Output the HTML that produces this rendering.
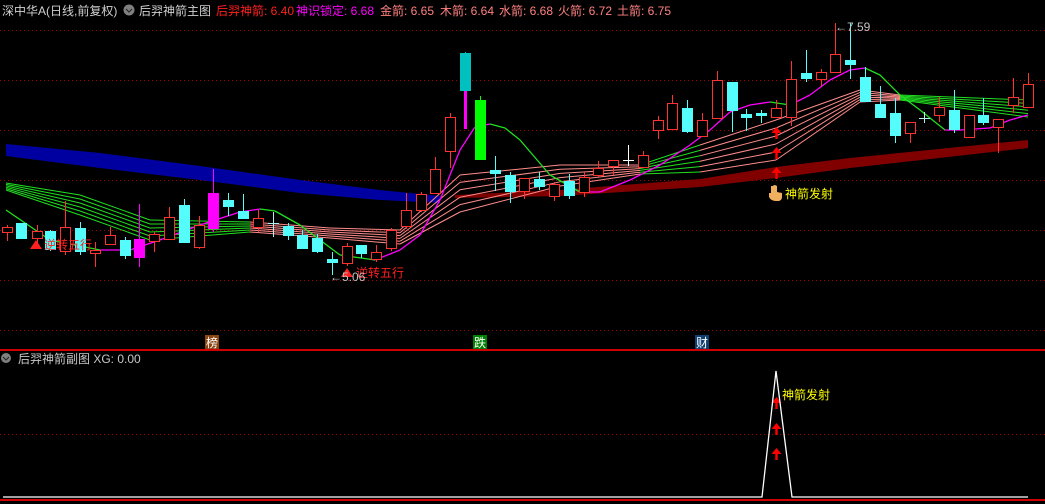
<!DOCTYPE html>
<html><head><meta charset="utf-8">
<style>
html,body{margin:0;padding:0;background:#000;width:1045px;height:504px;overflow:hidden}
svg{display:block}
text{font-family:"Liberation Sans","Noto Sans CJK SC",sans-serif;font-size:12px}
</style></head>
<body>
<svg id="s" width="1045" height="504" viewBox="0 0 1045 504" xmlns="http://www.w3.org/2000/svg">
<g stroke="#a00000" stroke-dasharray="1,3" stroke-width="1">
<line x1="0" y1="30.5" x2="1045" y2="30.5"/><line x1="0" y1="80.5" x2="1045" y2="80.5"/>
<line x1="0" y1="130.5" x2="1045" y2="130.5"/><line x1="0" y1="180.5" x2="1045" y2="180.5"/>
<line x1="0" y1="230.5" x2="1045" y2="230.5"/><line x1="0" y1="280.5" x2="1045" y2="280.5"/>
<line x1="0" y1="330.5" x2="1045" y2="330.5"/><line x1="0" y1="434.5" x2="1045" y2="434.5"/>
</g>
<polygon fill="#0000a0" points="6,144 100,153 200,166 300,180 380,190 440,196 440,203 380,200 300,193 200,180 100,168 6,156"/>
<polygon fill="#800000" points="455,195 560,190 700,179 776,167 850,158 1028,140 1028,148 850,168 776,178 700,187 560,196 455,198"/>
<g id="fan" fill="none" stroke-width="1"></g>
<g id="ma" fill="none" stroke-width="1.3"></g>
<g id="c"></g>
<polygon points="30,249 36,240 42,249" fill="#ff2020"/>
<text x="44" y="249" fill="#ff2020" font-size="13">逆转五行</text>
<polygon points="341,277 347,268 353,277" fill="#ff2020"/>
<text x="356" y="277" fill="#ff2020" font-size="13">逆转五行</text>
<text x="330" y="281" fill="#c0c0c0">←5.06</text>
<text x="835" y="31" fill="#c0c0c0">←7.59</text>
<g fill="#ff0000" id="arr"></g>
<path d="M771,186 l0,7 l-2,0 l0,4 q2,4 7,4 l3,0 q3,-1 3,-4 l0,-4 l-5,-1 l0,-6 q-3,-2 -4,0z" fill="#f0b060"/>
<text x="785" y="198" fill="#ffff00" font-size="13">神箭发射</text>
<rect x="205" y="335" width="14" height="14" fill="#8b4513"/><text x="206" y="347" fill="#fff">榜</text>
<rect x="473" y="335" width="14" height="14" fill="#008000"/><text x="474" y="347" fill="#fff">跌</text>
<rect x="695" y="335" width="14" height="14" fill="#104070"/><text x="696" y="347" fill="#fff">财</text>
<rect x="0" y="349" width="1045" height="2" fill="#d00000"/>
<rect x="0" y="499" width="1045" height="2" fill="#d00000"/>
<circle cx="6" cy="358" r="5" fill="#808080"/><path d="M3,357 l3,3 l3,-3" stroke="#222" fill="none"/>
<text x="18" y="363" fill="#c8c8c8">后羿神箭副图 XG: 0.00</text>
<polyline points="3,497 762,497 776,371 792,497 1028,497" fill="none" stroke="#fff" stroke-width="1.3"/>
<text x="782" y="399" fill="#ffff00" font-size="13">神箭发射</text>
<text x="2" y="15" fill="#d0d0d0">深中华A(日线,前复权)</text>
<circle cx="129" cy="10" r="5.5" fill="#808080"/><path d="M126,9 l3,3 l3,-3" stroke="#222" fill="none"/>
<text x="139" y="15" fill="#d0d0d0">后羿神箭主图</text>
<text x="216" y="15" fill="#ff2020">后羿神箭: 6.40</text>
<text x="296" y="15" fill="#ff00ff">神识锁定: 6.68</text>
<text x="380" y="15" fill="#ff8080">金箭: 6.65</text>
<text x="440" y="15" fill="#ff8080">木箭: 6.64</text>
<text x="499" y="15" fill="#ff8080">水箭: 6.68</text>
<text x="558" y="15" fill="#ff8080">火箭: 6.72</text>
<text x="617" y="15" fill="#ff8080">土箭: 6.75</text>
</svg>
<script>
var NS="http://www.w3.org/2000/svg";
function el(p,t,a){var e=document.createElementNS(NS,t);for(var k in a)e.setAttribute(k,a[k]);p.appendChild(e);return e;}
var env=[[6,183,190,'g'],[80,195,215,'g'],[150,220,240,'g'],[250,222,232,'p'],[330,228,238,'p'],[400,230,244,'p'],[460,175,212,'p'],[560,165,186,'p'],[640,165,174,'g'],[700,145,172,'p'],[776,120,160,'p'],[860,90,102,'p'],[900,95,100,'g'],[1028,100,117,'g']];
var fan=document.getElementById('fan');
for(var i=0;i<6;i++){var f=i/5;
 for(var j=0;j<env.length-1;j++){var a=env[j],b=env[j+1];
  var y1=a[1]+(a[2]-a[1])*f,y2=b[1]+(b[2]-b[1])*f;
  el(fan,'line',{x1:a[0],y1:y1,x2:b[0],y2:y2,stroke:a[3]=='g'?'#20e020':'#ff8c8c'});}}
var ma=[[6,210,'g'],[50,240,'g'],[100,250,'m'],[130,250,'m'],[160,240,'m'],[200,225,'m'],[240,212,'m'],[260,209,'g'],[275,211,'g'],[300,225,'g'],[340,255,'g'],[375,260,'m'],[400,250,'m'],[420,235,'m'],[440,200,'m'],[460,150,'m'],[475,127,'m'],[490,124,'g'],[505,128,'g'],[520,140,'g'],[550,175,'g'],[580,192,'m'],[600,192,'m'],[630,180,'m'],[660,165,'m'],[690,145,'m'],[710,130,'m'],[730,112,'m'],[750,105,'m'],[770,102,'g'],[790,105,'m'],[810,95,'m'],[830,80,'m'],[850,70,'m'],[865,68,'g'],[880,75,'g'],[900,95,'g'],[920,110,'g'],[945,130,'m'],[960,130,'m'],[990,128,'m'],[1010,120,'m'],[1028,115,'m']];
var mg=document.getElementById('ma');
for(var j=0;j<ma.length-1;j++)el(mg,'line',{x1:ma[j][0],y1:ma[j][1],x2:ma[j+1][0],y2:ma[j+1][1],stroke:ma[j][2]=='g'?'#20e020':'#ff00ff'});
var C=[[7,'r',227,232,225,241],[21,'c',223,239,223,239],[37,'r',231,238,225,243],[50,'c',231,250,230,251],[65,'r',227,251,201,255],[80,'c',228,252,222,255],[95,'r',250,253,242,267],[110,'r',235,244,227,244],[125,'c',240,256,237,259],[139,'m',239,258,204,267],[154,'r',234,241,232,252],[169,'r',217,239,207,239],[184,'c',205,243,199,243],[199,'r',225,247,216,249],[213,'m',193,229,169,232],[228,'c',200,207,193,216],[243,'c',211,219,194,219],[258,'r',218,227,210,232],[273,'x',223,223,212,237],[288,'c',226,236,223,240],[302,'c',235,249,230,249],[317,'c',238,252,234,253],[332,'c',259,263,252,275],[347,'r',246,263,243,266],[361,'c',245,254,245,258],[376,'r',252,259,245,262],[391,'r',230,248,228,251],[406,'r',210,226,193,229],[421,'r',194,210,192,212],[435,'r',169,193,157,193],[450,'r',117,151,113,168],[465,'t',53,91,52,91],[480,'g',100,160,96,160],[495,'c',170,174,156,191],[510,'c',175,192,172,203],[524,'r',178,191,178,199],[539,'c',179,187,172,190],[554,'r',184,196,182,201],[569,'c',181,196,174,199],[584,'r',177,192,172,197],[598,'r',168,175,161,177],[613,'r',160,166,160,175],[628,'w',160,160,145,166],[643,'r',155,167,151,167],[658,'r',120,130,116,139],[672,'r',103,129,95,129],[687,'c',108,132,100,133],[702,'r',120,136,113,136],[717,'r',80,118,71,118],[732,'c',82,111,82,132],[746,'c',114,118,109,131],[761,'c',113,116,110,123],[776,'r',108,117,100,117],[791,'r',79,117,61,126],[806,'c',73,79,50,82],[821,'r',72,79,69,86],[835,'r',54,72,23,72],[850,'c',60,65,23,79],[865,'c',77,102,67,102],[880,'c',104,118,86,118],[895,'c',113,136,98,143],[910,'r',122,133,122,143],[924,'x',118,118,112,123],[939,'r',107,115,97,122],[954,'c',110,130,90,133],[969,'r',115,137,115,137],[983,'c',115,123,98,125],[998,'r',119,127,119,153],[1013,'r',97,105,78,113],[1028,'r',84,107,73,107]];
var cg=document.getElementById('c');
var col={r:'#ff3232',c:'#54fcfc',m:'#ff00ff',w:'#ffffff',x:'#b0f0f0',g:'#00ff00',t:'#00c0c0'};
C.forEach(function(d){var x=d[0],t=d[1],c=col[t];
 el(cg,'line',{x1:x+.5,y1:d[4],x2:x+.5,y2:d[5],stroke:c});
 if(t=='w'||t=='x'){el(cg,'line',{x1:x-5,y1:d[2]+.5,x2:x+6,y2:d[2]+.5,stroke:c});return;}
 if(t=='r'){el(cg,'rect',{x:x-4.5,y:d[2]+.5,width:10,height:d[3]-d[2],fill:'#000',stroke:c});}
 else el(cg,'rect',{x:x-5,y:d[2],width:11,height:Math.max(1,d[3]-d[2]),fill:c});
 if(t=='t')el(cg,'rect',{x:x-1,y:91,width:3,height:38,fill:'#ff00ff'});
});
var ag=document.getElementById('arr');
[[776,127],[776,147],[776,167],[776,397],[776,423],[776,448]].forEach(function(p){
 var x=p[0]+.5,y=p[1];
 el(ag,'path',{d:'M'+(x-5)+','+(y+6)+' L'+x+','+y+' L'+(x+5)+','+(y+6)+' L'+(x+1.2)+','+(y+6)+' L'+(x+1.2)+','+(y+12)+' L'+(x-1.2)+','+(y+12)+' L'+(x-1.2)+','+(y+6)+'Z'});});
</script>
</body></html>
